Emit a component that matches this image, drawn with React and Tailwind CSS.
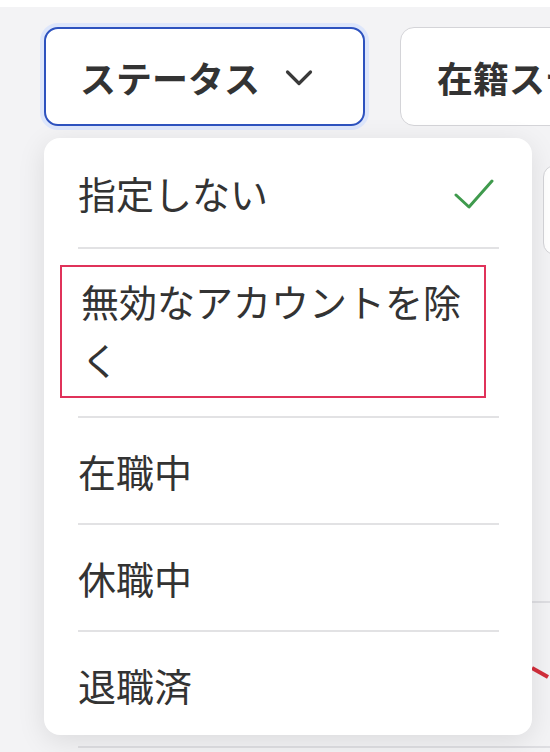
import { useState } from "react";

const FONT = { fontFamily: '"Noto Sans CJK JP", "Noto Sans", sans-serif' };

const options = [
  { label: "指定しない" },
  { label: "無効なアカウントを除く", highlight: true },
  { label: "在職中" },
  { label: "休職中" },
  { label: "退職済" },
];

const Chevron = () => (
  <svg width="28" height="18" viewBox="0 0 28 18" fill="none" stroke="#3a3a3a" strokeWidth="3.2" strokeLinecap="round" strokeLinejoin="round">
    <polyline points="2.5,3 14,14.5 25.5,3" />
  </svg>
);

const Check = () => (
  <svg width="40" height="32" viewBox="0 0 40 32" fill="none" stroke="#3f9a4d" strokeWidth="3" strokeLinecap="round" strokeLinejoin="round">
    <polyline points="2,17 15,29 38,3" />
  </svg>
);

const App = () => {
  const [selected] = useState(0);

  return (
    <div className="relative w-[550px] h-[752px] overflow-hidden bg-[#f3f3f5]" style={FONT}>
      <div className="h-[7px] bg-white" />

      {/* filter buttons */}
      <div className="flex gap-[35px] pl-[44px] mt-[20px] whitespace-nowrap">
        <button className="flex items-center h-[99px] w-[321px] shrink-0 pl-[34px] rounded-[14px] border-2 border-[#2d52bf] bg-white ring-4 ring-[#dde6fb] text-[36px] font-bold text-[#333]">
          <span>ステータス</span>
          <span className="ml-[25px] mt-[2px]">
            <Chevron />
          </span>
        </button>
        <button className="flex items-center h-[99px] shrink-0 pl-[36px] pr-[34px] rounded-[14px] border-[1.5px] border-[#d4d4d8] bg-white text-[36px] font-bold text-[#333]">
          <span>在籍ステータス</span>
          <span className="ml-[25px] mt-[2px]">
            <Chevron />
          </span>
        </button>
      </div>

      {/* page content behind the menu */}
      <div className="flex pl-[543px] mt-[39px]">
        <div className="w-[90px] h-[90px] shrink-0 rounded-[12px] border-[1.5px] border-[#d4d4d8] bg-white" />
      </div>
      <div className="ml-[78px] mt-[346px] border-t-2 border-[#dedee2]">
        <div className="flex justify-end h-[143px] pt-[62px]">
          <svg width="20" height="16" viewBox="0 0 20 16">
            <line x1="2" y1="3" x2="18" y2="12" stroke="#d32f3c" strokeWidth="4" />
          </svg>
        </div>
        <div className="border-t-2 border-[#dedee2]" />
      </div>

      {/* dropdown menu */}
      <div className="absolute left-[44px] top-[138px] w-[488px] rounded-[16px] bg-white shadow-[0_6px_28px_rgba(0,0,0,0.10)] pl-[34px] pr-[33px] text-[38px] text-[#333]">
        {options.map((opt, i) => {
          const last = i === options.length - 1;
          const pad = i === 0 ? "py-[26px]" : last ? "pt-[24px] pb-[22px]" : "py-[24px]";
          return (
            <div key={opt.label} className={last ? "" : "border-b-2 border-[#e2e2e4]"}>
              {opt.highlight ? (
                <div className="pt-[16px] pb-[18px]">
                  <div className="ml-[-18px] w-[426px] border-2 border-[#e0325a] pl-[19px] pr-[19px] pt-[5px] pb-[8px] leading-[58px]">
                    {opt.label}
                  </div>
                </div>
              ) : (
                <div className={`flex items-center justify-between leading-[57px] ${pad}`}>
                  <span>{opt.label}</span>
                  {selected === i && (
                    <span className="mr-[5px] mt-[2px]">
                      <Check />
                    </span>
                  )}
                </div>
              )}
            </div>
          );
        })}
      </div>
    </div>
  );
};

export default App;
